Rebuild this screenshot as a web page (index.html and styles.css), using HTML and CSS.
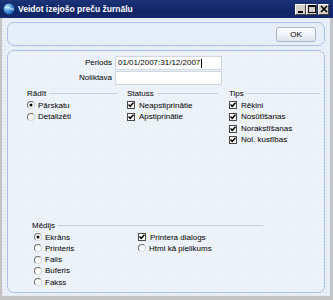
FILE: index.html
```html
<!DOCTYPE html>
<html>
<head>
<meta charset="utf-8">
<link rel="stylesheet" href="styles.css">
</head>
<body>
<div class="window">
  <div class="titlebar">
    <svg class="app-icon" width="12" height="12" viewBox="0 0 12 12">
      <defs>
        <radialGradient id="g" cx="0.35" cy="0.35" r="0.7">
          <stop offset="0" stop-color="#bfe6ff"/>
          <stop offset="0.6" stop-color="#3c8fd8"/>
          <stop offset="1" stop-color="#1a4f9a"/>
        </radialGradient>
      </defs>
      <circle cx="6" cy="6" r="5.5" fill="url(#g)"/>
      <path d="M2 5 Q5 3 7 5 T11 6" stroke="#e8f6ff" stroke-width="1" fill="none"/>
    </svg>
    <span class="title">Veidot izejošo preču žurnālu</span>
    <div class="wbtns">
      <span class="wbtn"><svg width="8" height="8" viewBox="0 0 8 8"><rect x="1" y="6" width="5" height="2" fill="#000"/></svg></span>
      <span class="wbtn"><svg width="8" height="8" viewBox="0 0 8 8"><rect x="0.5" y="0.5" width="7" height="7" fill="none" stroke="#000"/><rect x="0" y="0" width="8" height="2" fill="#000"/></svg></span>
      <span class="wbtn close"><svg width="8" height="8" viewBox="0 0 8 8"><path d="M1 1 L7 7 M7 1 L1 7" stroke="#000" stroke-width="1.6"/></svg></span>
    </div>
  </div>
  <div class="client">
    <div class="panel toolbar">
      <button class="okbtn">OK</button>
    </div>
    <div class="panel main">
      <div class="fields">
        <label class="flabel">Periods</label>
        <div class="input">01/01/2007:31/12/2007<span class="caret"></span></div>
        <label class="flabel">Noliktava</label>
        <div class="input"></div>
      </div>
      <div class="groups">
        <div class="group g1">
          <div class="ghead">Rādīt</div>
          <div class="row"><span class="radio on"></span>Pārskatu</div>
          <div class="row"><span class="radio"></span>Detalizēti</div>
        </div>
        <div class="group g2">
          <div class="ghead">Statuss</div>
          <div class="row"><span class="check on"></span>Neapstiprinātie</div>
          <div class="row"><span class="check on"></span>Apstiprinātie</div>
        </div>
        <div class="group g3">
          <div class="ghead">Tips</div>
          <div class="row"><span class="check on"></span>Rēķini</div>
          <div class="row"><span class="check on"></span>Nosūtīšanas</div>
          <div class="row"><span class="check on"></span>Norakstīšanas</div>
          <div class="row"><span class="check on"></span>Nol. kustības</div>
        </div>
      </div>
      <div class="group media">
        <div class="ghead">Mēdijs</div>
        <div class="mgrid">
          <div class="row"><span class="radio on"></span>Ekrāns</div>
          <div class="row"><span class="check on"></span>Printera dialogs</div>
          <div class="row"><span class="radio"></span>Printeris</div>
          <div class="row"><span class="radio"></span>Html kā pielikums</div>
          <div class="row"><span class="radio"></span>Fails</div>
          <div class="row"></div>
          <div class="row"><span class="radio"></span>Buferis</div>
          <div class="row"></div>
          <div class="row"><span class="radio"></span>Fakss</div>
        </div>
      </div>
    </div>
  </div>
</div>
</body>
</html>
```

FILE: styles.css
```css
* { box-sizing: border-box; }
html, body { margin: 0; padding: 0; }
body {
  width: 333px;
  height: 300px;
  overflow: hidden;
  font-family: "Liberation Sans", Arial, sans-serif;
  font-size: 8px;
  color: #000;
}
.window {
  width: 333px;
  height: 300px;
  display: flex;
  flex-direction: column;
  background: #c4c4c4;
}
.titlebar {
  height: 18px;
  flex: none;
  display: flex;
  align-items: center;
  background: linear-gradient(#1c3378, #0f2566 60%, #13296c);
  padding-left: 3px;
}
.app-icon { flex: none; }
.title {
  margin-left: 3px;
  color: #fff;
  font-weight: bold;
  font-size: 8.5px;
}
.wbtns {
  margin-left: auto;
  margin-right: 4px;
  display: flex;
}
.wbtn {
  width: 11px;
  height: 11px;
  background: #d4d0c8;
  border: 1px solid;
  border-color: #fff #404040 #404040 #fff;
  display: flex;
  align-items: center;
  justify-content: center;
}
.wbtn.close { margin-left: 1px; }
.client {
  flex: 1;
  margin: 0 3px 4px 2px;
  padding: 4px 5px 3px 5px;
  display: flex;
  flex-direction: column;
  background-color: #eef3fa;
  background-image:
    repeating-linear-gradient(0deg, rgba(200,214,232,0.25) 0 1px, transparent 1px 3px),
    repeating-linear-gradient(90deg, rgba(200,214,232,0.25) 0 1px, transparent 1px 3px);
}
.panel {
  border: 1px solid #a9c1e4;
  border-radius: 7px;
  background: rgba(240,245,252,0.6);
}
.toolbar {
  height: 24px;
  flex: none;
  display: flex;
  align-items: center;
  justify-content: flex-end;
  padding-right: 8px;
  background: #e6eef9;
}
.okbtn {
  width: 40px;
  height: 15px;
  margin-top: 1px;
  border: 1px solid #a6b4c8;
  border-radius: 3px;
  background: linear-gradient(#ffffff, #edf1f6 60%, #dde3ec);
  font-family: "Liberation Sans", Arial, sans-serif;
  font-size: 8px;
  color: #000;
  padding: 0;
}
.main {
  margin-top: 4px;
  flex: 1;
  display: flex;
  flex-direction: column;
  padding: 5px 0 4px 0;
}
.fields {
  display: grid;
  grid-template-columns: 104px 107px;
  grid-auto-rows: 14px;
  column-gap: 3px;
  row-gap: 1px;
}
.flabel {
  text-align: right;
  line-height: 14px;
}
.input {
  background: #fff;
  border: 1px solid #cfd6e0;
  line-height: 12px;
  padding-left: 2px;
  display: flex;
  align-items: center;
}
.caret {
  display: inline-block;
  width: 1px;
  height: 9px;
  background: #000;
  margin-left: 1px;
}
.groups {
  display: flex;
  margin-top: 3px;
  padding-left: 19px;
}
.group { line-height: 11.6px; }
.g1 { width: 91px; }
.g2 { width: 91px; margin-left: 9px; }
.g3 { width: 91px; margin-left: 11px; }
.ghead {
  display: flex;
  align-items: center;
  height: 11.6px;
}
.ghead::after {
  content: "";
  flex: 1;
  height: 1px;
  background: #c9d1dc;
  margin-left: 3px;
}
.row {
  display: flex;
  align-items: center;
  height: 11.6px;
  white-space: nowrap;
}
.radio {
  flex: none;
  width: 8px;
  height: 8px;
  border-radius: 50%;
  border: 1px solid;
  border-color: #6f6f6f #d0d0d0 #d8d8d8 #6f6f6f;
  background: #fff;
  margin-right: 3px;
  position: relative;
}
.radio.on::after {
  content: "";
  position: absolute;
  left: 2px;
  top: 2px;
  width: 2px;
  height: 2px;
  border-radius: 50%;
  background: #000;
  box-shadow: 0 0 0 0.5px #000;
}
.check {
  flex: none;
  width: 8px;
  height: 8px;
  border: 1px solid #4a4a4a;
  background: #fff;
  margin-right: 4px;
}
.check.on {
  background-image: url("data:image/svg+xml;utf8,<svg xmlns='http://www.w3.org/2000/svg' width='6' height='6' viewBox='0 0 6 6'><path d='M0.5 2.5 L2.2 4.3 L5.5 0.8' stroke='black' stroke-width='1.5' fill='none'/></svg>");
  background-repeat: no-repeat;
  background-position: center;
}
.media {
  margin-top: auto;
  margin-left: 24px;
  width: 231px;
  line-height: 11.3px;
}
.media .ghead, .media .row { height: 11.3px; }
.mgrid {
  display: grid;
  grid-template-columns: 104px 1fr;
  padding-left: 2px;
}
```
